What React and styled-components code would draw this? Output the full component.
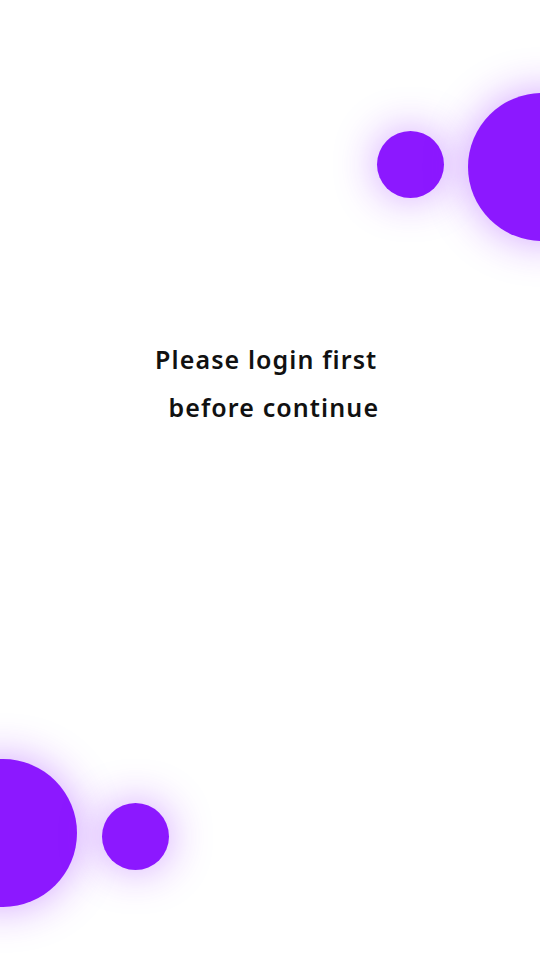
import React from "react";
import styled, { createGlobalStyle } from "styled-components";

const Global = createGlobalStyle`
  html, body { margin: 0; padding: 0; background: #ffffff; }
  #root { width: 540px; height: 960px; }
`;

const Page = styled.div`
  width: 540px;
  height: 960px;
  overflow: hidden;
  background: #ffffff;
  display: flex;
  flex-direction: column;
`;

const DecorRow = styled.div`
  display: flex;
  align-items: center;
  gap: ${(p) => p.$gap}px;
  justify-content: ${(p) => (p.$side === "right" ? "flex-end" : "flex-start")};
  margin-top: ${(p) => p.$top}px;
  margin-bottom: ${(p) => p.$bottom}px;
  margin-right: ${(p) => (p.$side === "right" ? p.$bleed : 0)}px;
  margin-left: ${(p) => (p.$side === "left" ? p.$bleed : 0)}px;
`;

const Bubble = styled.div`
  flex: none;
  width: ${(p) => p.$size}px;
  height: ${(p) => p.$size}px;
  border-radius: 50%;
  background: #8c18ff;
  box-shadow: 0 0 ${(p) => p.$glow}px rgba(140, 24, 255, 0.42);
  transform: translateY(${(p) => p.$shift || 0}px);
`;

const Message = styled.p`
  margin: ${(p) => p.$top}px 0 0;
  font-family: "Noto Sans", "Open Sans", sans-serif;
  font-weight: 600;
  font-size: 25px;
  letter-spacing: 1.1px;
  line-height: 48px;
  color: #111111;
  text-align: center;
  white-space: pre-wrap;
`;

const Spacer = styled.div`
  flex: 1;
`;

export default function App() {
  return (
    <>
      <Global />
      <Page>
        <DecorRow $side="right" $top={93} $bottom={0} $bleed={-76} $gap={24}>
          <Bubble $size={67} $glow={44} $shift={-3} />
          <Bubble $size={148} $glow={44} />
        </DecorRow>
        <Message $top={94}>{"Please login first \n before continue"}</Message>
        <Spacer />
        <DecorRow $side="left" $top={0} $bottom={53} $bleed={-71} $gap={25}>
          <Bubble $size={148} $glow={44} />
          <Bubble $size={67} $glow={44} $shift={3} />
        </DecorRow>
      </Page>
    </>
  );
}
